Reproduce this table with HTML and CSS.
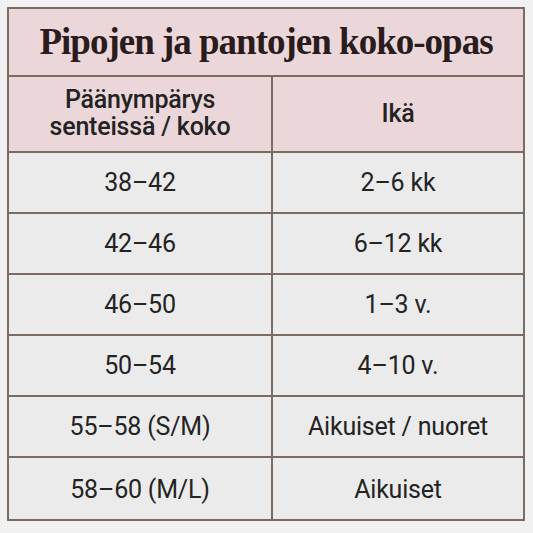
FILE: index.html
```html
<!DOCTYPE html>
<html lang="fi">
<head>
<meta charset="utf-8">
<title>Pipojen ja pantojen koko-opas</title>
<link rel="stylesheet" href="styles.css">
</head>
<body>
<div class="chart">
  <h1 class="title">Pipojen ja pantojen koko-opas</h1>
  <div class="grid">
    <div class="cell head left">Päänympärys<br>senteissä / koko</div>
    <div class="cell head">Ikä</div>
    <div class="cell left">38–42</div>
    <div class="cell">2–6 kk</div>
    <div class="cell left">42–46</div>
    <div class="cell">6–12 kk</div>
    <div class="cell left">46–50</div>
    <div class="cell">1–3 v.</div>
    <div class="cell left">50–54</div>
    <div class="cell">4–10 v.</div>
    <div class="cell left">55–58 (S/M)</div>
    <div class="cell">Aikuiset / nuoret</div>
    <div class="cell left last">58–60 (M/L)</div>
    <div class="cell last">Aikuiset</div>
  </div>
</div>
</body>
</html>
```
FILE: styles.css
```css
html, body {
  margin: 0;
  padding: 0;
  background: #f1f1f1;
}
body {
  padding: 7px;
}
.chart {
  width: 514px;
  border: 2px solid #7c6b61;
  background: #ebebeb;
}
.title {
  margin: 0;
  height: 68px;
  display: flex;
  align-items: center;
  justify-content: center;
  background: #ebd7da;
  border-bottom: 2px solid #7c6b61;
  font-family: "Liberation Serif", serif;
  font-weight: bold;
  font-size: 37px;
  letter-spacing: -1px;
  color: #2a1c1c;
  padding-bottom: 2px;
  box-sizing: border-box;
}
.grid {
  display: grid;
  grid-template-columns: 264px 1fr;
  grid-template-rows: 76px;
  grid-auto-rows: 61px;
}
.cell {
  display: flex;
  align-items: center;
  justify-content: center;
  text-align: center;
  font-family: Roboto, "Liberation Sans", sans-serif;
  font-size: 25px;
  letter-spacing: -0.2px;
  color: #232323;
  border-bottom: 2px solid #7c6b61;
}
.left {
  border-right: 2px solid #7c6b61;
}
.head {
  background: #ebd7da;
  font-size: 25px;
  font-weight: 500;
  line-height: 27px;
  height: 76px;
  box-sizing: border-box;
  padding-bottom: 2px;
}
.last {
  border-bottom: none;
  height: 63px;
}
```
